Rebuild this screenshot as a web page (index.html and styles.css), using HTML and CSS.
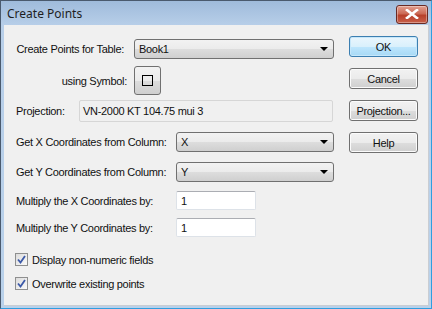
FILE: index.html
```html
<!DOCTYPE html>
<html>
<head>
<meta charset="utf-8">
<link rel="stylesheet" href="styles.css">
</head>
<body>
<div class="window">
  <div class="titlebar">
    <span class="title">Create Points</span>
    <div class="close">
      <svg width="14" height="10" viewBox="0 0 14 10"><path d="M2 1 L12 9 M12 1 L2 9" stroke="#fff" stroke-width="2.6" stroke-linecap="square"/></svg>
    </div>
  </div>
  <div class="client">
    <div class="form">
      <div class="row r1">
        <label class="lab-right">Create Points for Table:</label>
        <div class="combo w200"><span>Book1</span><i class="arrow"></i></div>
      </div>
      <div class="row r2">
        <label class="lab-right sym">using Symbol:</label>
        <div class="symbtn"><span class="sq"></span></div>
      </div>
      <div class="row r3">
        <label class="lab proj">Projection:</label>
        <div class="ro">VN-2000 KT 104.75 mui 3</div>
      </div>
      <div class="row r4">
        <label class="lab wide">Get X Coordinates from Column:</label>
        <div class="combo w158"><span>X</span><i class="arrow"></i></div>
      </div>
      <div class="row r5">
        <label class="lab wide">Get Y Coordinates from Column:</label>
        <div class="combo w158"><span>Y</span><i class="arrow"></i></div>
      </div>
      <div class="row r6">
        <label class="lab wide">Multiply the X Coordinates by:</label>
        <div class="edit">1</div>
      </div>
      <div class="row r7">
        <label class="lab wide">Multiply the Y Coordinates by:</label>
        <div class="edit">1</div>
      </div>
      <div class="row cb c1">
        <span class="check"><svg width="9" height="9" viewBox="0 0 9 9"><path d="M1 4.5 L3.5 7.5 L8 1" fill="none" stroke="#3b59a8" stroke-width="1.8"/></svg></span>
        <span class="cbl">Display non-numeric fields</span>
      </div>
      <div class="row cb c2">
        <span class="check"><svg width="9" height="9" viewBox="0 0 9 9"><path d="M1 4.5 L3.5 7.5 L8 1" fill="none" stroke="#3b59a8" stroke-width="1.8"/></svg></span>
        <span class="cbl">Overwrite existing points</span>
      </div>
    </div>
    <div class="buttons">
      <div class="btn default">OK</div>
      <div class="btn">Cancel</div>
      <div class="btn">Projection...</div>
      <div class="btn">Help</div>
    </div>
  </div>
</div>
</body>
</html>
```

FILE: styles.css
```css
html, body {
  margin: 0;
  padding: 0;
  background: #ffffff;
}
.window {
  width: 432px;
  height: 309px;
  box-sizing: border-box;
  background: linear-gradient(#9fbbdb, #b8cfe9 25px, #b9d1ea);
  border: 1px solid #4a5a6e;
  border-right-color: #2f9ee0;
  border-bottom-color: #2f9ee0;
  font-family: "Liberation Sans", Arial, sans-serif;
  font-size: 11px;
  letter-spacing: -0.3px;
  color: #111;
  display: flex;
  flex-direction: column;
  white-space: nowrap;
}
.titlebar {
  height: 24px;
  display: flex;
  align-items: center;
  justify-content: space-between;
  padding: 0 3px 0 6px;
}
.title {
  font-family: "Noto Sans", "Liberation Sans", sans-serif;
  font-size: 12px;
  letter-spacing: 0;
  color: #1e1e1e;
  padding-top: 1px;
}
.close {
  width: 30px;
  height: 17px;
  margin-top: 2px;
  border: 1px solid #6a2a24;
  border-radius: 3px;
  background: linear-gradient(#e3a091, #cc6a55 45%, #b8402a 55%, #c8604a);
  display: flex;
  align-items: center;
  justify-content: center;
  box-shadow: inset 0 0 0 1px rgba(255,255,255,0.35);
}
.client {
  margin: 0 2px 2px 3px;
  height: 280px;
  background: #f0f0f0;
  border-right: 1px solid #c9cdd3;
  border-bottom: 1px solid #c9cdd3;
  display: flex;
}
.form {
  width: 321px;
  margin-left: 9px;
  display: flex;
  flex-direction: column;
}
.row {
  display: flex;
  align-items: center;
}
.r1 { margin-top: 14px; height: 20px; }
.r2 { margin-top: 7px; height: 29px; }
.r3 { margin-top: 5px; height: 22px; }
.r4 { margin-top: 10px; height: 20px; }
.r5 { margin-top: 10px; height: 20px; }
.r6 { margin-top: 9px; height: 19px; }
.r7 { margin-top: 8px; height: 19px; }
.c1 { margin-top: 16px; height: 13px; }
.c2 { margin-top: 11px; height: 13px; }

.lab-right {
  width: 111px;
  text-align: right;
  padding-right: 10px;
}
.lab-right.sym {
  width: 114px;
  padding-right: 7px;
}
.lab {
  padding-left: 3px;
}
.lab.proj { width: 63px; }
.lab.wide { width: 160px; }

.combo {
  box-sizing: border-box;
  height: 20px;
  border: 1px solid #707070;
  border-radius: 3px;
  background: linear-gradient(#f2f2f2 0, #ebebeb 50%, #dddddd 51%, #cfcfcf 100%);
  display: flex;
  align-items: center;
  justify-content: space-between;
  padding: 0 5px 0 4px;
}
.combo.w200 { width: 200px; }
.combo.w158 { width: 158px; }
.arrow {
  width: 0;
  height: 0;
  border-left: 4px solid transparent;
  border-right: 4px solid transparent;
  border-top: 4px solid #000;
}
.symbtn {
  box-sizing: border-box;
  width: 27px;
  height: 29px;
  border: 1px solid #707070;
  border-radius: 3px;
  background: linear-gradient(#f2f2f2 0, #ebebeb 50%, #dddddd 51%, #cfcfcf 100%);
  display: flex;
  align-items: center;
  justify-content: center;
}
.sq {
  width: 9px;
  height: 9px;
  border: 1px solid #000;
}
.ro {
  box-sizing: border-box;
  width: 254px;
  height: 22px;
  border: 1px solid #d6d6d6;
  border-radius: 2px;
  background: #f0f0f0;
  padding: 0 3px;
  display: flex;
  align-items: center;
}
.edit {
  box-sizing: border-box;
  width: 80px;
  height: 19px;
  border: 1px solid #dde2e8;
  border-top-color: #abadb3;
  border-radius: 2px;
  background: #fff;
  padding: 0 4px;
  display: flex;
  align-items: center;
}
.cb { padding-left: 2px; }
.check {
  box-sizing: border-box;
  width: 13px;
  height: 13px;
  border: 1px solid #8e8f8f;
  background: linear-gradient(135deg, #dcdcdc, #fafafa);
  display: flex;
  align-items: center;
  justify-content: center;
}
.cbl { margin-left: 4px; }

.buttons {
  margin-left: 15px;
  display: flex;
  flex-direction: column;
  padding-top: 11px;
  gap: 11px;
}
.btn {
  box-sizing: border-box;
  width: 69px;
  height: 21px;
  border: 1px solid #707070;
  border-radius: 3px;
  background: linear-gradient(#f2f2f2 0, #ebebeb 50%, #dddddd 51%, #cfcfcf 100%);
  box-shadow: inset 0 0 0 1px #fbfbfb;
  display: flex;
  align-items: center;
  justify-content: center;
}
.btn.default {
  border-color: #3c7fb1;
  background: linear-gradient(#eaf6fd 0, #d9f0fc 50%, #bee6fd 51%, #a7d9f5 100%);
  box-shadow: inset 0 0 0 1px #c6e7fa;
}
```
